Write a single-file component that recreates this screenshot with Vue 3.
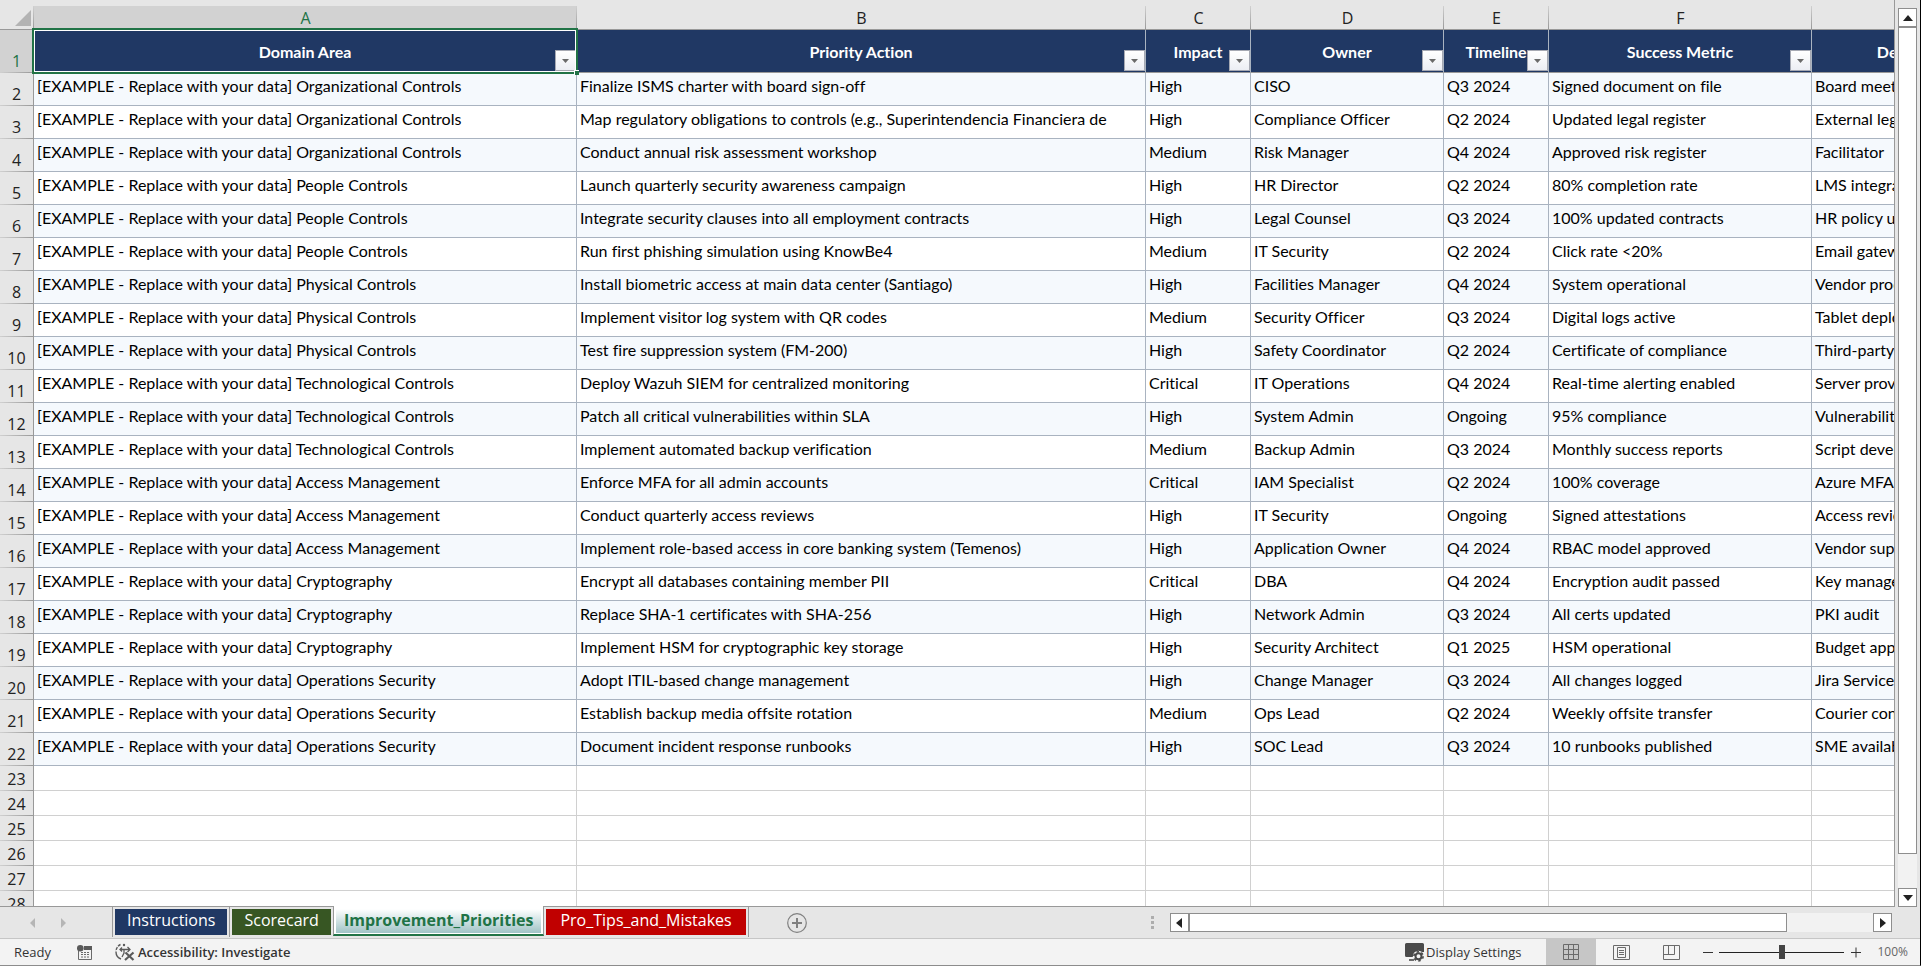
<template>
  <div class="workbook">
    <div class="workspace">
      <div class="sheet">
        <table class="grid">
          <colgroup>
            <col class="col-index" />
            <col v-for="col in columns" :key="col.letter" :class="'col-' + col.letter.toLowerCase()" />
          </colgroup>
          <thead>
            <tr class="letters">
              <th class="corner">
                <svg width="16" height="16" viewBox="0 0 16 16"><path d="M16 0V16H0Z" fill="#b3b3b3" /></svg>
              </th>
              <th
                v-for="col in columns"
                :key="col.letter"
                scope="col"
                class="letter"
                :class="{ selected: col.letter === 'A' }"
              >{{ col.letter }}</th>
            </tr>
          </thead>
          <tbody>
            <tr class="titles">
              <th scope="row" class="index selected">1</th>
              <th v-for="col in columns" :key="col.letter" class="title">
                {{ col.title }}
                <button type="button" class="filter" :aria-label="'Filter ' + col.title">
                  <svg width="7" height="4" viewBox="0 0 7 4"><path d="M0 0H7L3.5 4Z" fill="#6a6a6a" /></svg>
                </button>
                <span v-if="col.letter === 'A'" class="selection"></span>
              </th>
            </tr>
            <tr v-for="(row, i) in rows" :key="i" class="data" :class="{ banded: i % 2 === 0 }">
              <th scope="row" class="index">{{ i + 2 }}</th>
              <td>[EXAMPLE - Replace with your data] {{ row[0] }}</td>
              <td v-for="(cell, c) in row.slice(1)" :key="c">{{ cell }}</td>
            </tr>
            <tr v-for="n in 6" :key="'blank' + n" class="blank">
              <th scope="row" class="index">{{ n + 22 }}</th>
              <td v-for="col in columns" :key="col.letter"></td>
            </tr>
          </tbody>
        </table>
      </div>
      <div class="vscroll">
        <button type="button" class="scroll-btn" aria-label="Scroll up">
          <svg width="10" height="6" viewBox="0 0 10 6"><path d="M5 0L10 6H0Z" fill="#222" /></svg>
        </button>
        <div class="vtrack"><div class="vthumb"></div></div>
        <button type="button" class="scroll-btn" aria-label="Scroll down">
          <svg width="10" height="6" viewBox="0 0 10 6"><path d="M0 0H10L5 6Z" fill="#222" /></svg>
        </button>
      </div>
    </div>

    <div class="tabbar">
      <div class="tab-nav">
        <button type="button" aria-label="Previous sheet">
          <svg width="5" height="10" viewBox="0 0 5 10"><path d="M5 0V10L0 5Z" fill="#b5b5b5" /></svg>
        </button>
        <button type="button" aria-label="Next sheet">
          <svg width="5" height="10" viewBox="0 0 5 10"><path d="M0 0V10L5 5Z" fill="#b5b5b5" /></svg>
        </button>
      </div>
      <div class="tabs">
        <button
          v-for="tab in tabs"
          :key="tab.name"
          type="button"
          class="tab"
          :class="[tab.tone, { active: tab.name === activeTab }]"
          @click="activeTab = tab.name"
        ><span>{{ tab.name }}</span></button>
      </div>
      <button type="button" class="add-sheet" aria-label="New sheet">
        <svg width="20" height="20" viewBox="0 0 20 20" fill="none" stroke="#808080">
          <circle cx="10" cy="10" r="9.3" stroke-width="1.2" />
          <path d="M10 5V15M5 10H15" stroke-width="2" />
        </svg>
      </button>
      <div class="hscroll">
        <svg class="grip" width="3" height="13" viewBox="0 0 3 13" fill="#adadad">
          <path d="M0 0H3V3H0ZM0 5H3V8H0ZM0 10H3V13H0Z" />
        </svg>
        <button type="button" class="scroll-btn" aria-label="Scroll left">
          <svg width="6" height="10" viewBox="0 0 6 10"><path d="M6 0V10L0 5Z" fill="#222" /></svg>
        </button>
        <div class="htrack"><div class="hthumb"></div></div>
        <button type="button" class="scroll-btn" aria-label="Scroll right">
          <svg width="6" height="10" viewBox="0 0 6 10"><path d="M0 0V10L6 5Z" fill="#222" /></svg>
        </button>
      </div>
    </div>

    <div class="statusbar">
      <span class="ready">Ready</span>
      <button type="button" class="macro" aria-label="Record macro">
        <svg width="15" height="15" viewBox="0 0 15 15">
          <path d="M1.5 6V14.5H14.5V2" fill="none" stroke="#6a6a6a" />
          <path d="M7 1H15V5H7Z" fill="#5a5a5a" />
          <circle cx="3.3" cy="3.3" r="3.3" fill="#5a5a5a" />
          <path d="M4 7.5H6M7 7.5H9M10 7.5H12M4 9.5H6M7 9.5H9M10 9.5H12M4 12H6M7 12H9M10 12H12" stroke="#6a6a6a" />
        </svg>
      </button>
      <button type="button" class="accessibility">
        <svg width="20" height="18" viewBox="0 0 20 18" fill="none" stroke="#5a5a5a">
          <path d="M5.5 1.5A7.6 7.6 0 0 0 1 8.5" stroke-width="1.4" stroke-dasharray="3 1" />
          <path d="M1 9A7.6 7.6 0 0 0 6 16" stroke-width="1.4" />
          <circle cx="9" cy="2" r="1.2" fill="#5a5a5a" stroke="none" />
          <path d="M5 6.5H15M7 4.5L5 6.5L7 8.5M12.5 4L15 6.5L12.5 9M9 7V10L7 14" stroke-width="1.3" />
          <path d="M10.5 9.5L18.5 17M18.5 9.5L10 17" stroke-width="2.2" />
        </svg>
        Accessibility: Investigate
      </button>
      <div class="status-right">
        <button type="button" class="display">
          <svg width="19" height="19" viewBox="0 0 19 19">
            <path d="M1.5 0H17.5Q19 0 19 1.5V9H14L9 11V14H1.5Q0 14 0 12.5V1.5Q0 0 1.5 0Z" fill="#4a4a4a" />
            <path d="M4 17H9" stroke="#4a4a4a" stroke-width="1.6" />
            <circle cx="13.5" cy="13.3" r="5.6" fill="#f3f3f3" />
            <circle cx="13.5" cy="13.3" r="3" fill="none" stroke="#4a4a4a" stroke-width="2" />
            <circle cx="13.5" cy="13.3" r="4.6" fill="none" stroke="#4a4a4a" stroke-width="1.6" stroke-dasharray="2.4 2.4" />
          </svg>
          Display Settings
        </button>
        <button type="button" class="view on" aria-label="Normal view">
          <svg width="16" height="16" viewBox="0 0 16 16" fill="none" stroke="#6a6a6a">
            <path d="M.5 .5H15.5V15.5H.5ZM5.5 .5V15.5M10.5 .5V15.5M.5 5.5H15.5M.5 10.5H15.5" />
          </svg>
        </button>
        <button type="button" class="view" aria-label="Page layout view">
          <svg width="17" height="15" viewBox="0 0 17 15" fill="none" stroke="#6a6a6a">
            <path d="M.5 .5H16.5V14.5H.5ZM4.5 2.5H12.5V12.5H4.5ZM6 5.5H11M6 7.5H11M6 9.5H11" />
          </svg>
        </button>
        <button type="button" class="view" aria-label="Page break preview">
          <svg width="17" height="15" viewBox="0 0 17 15" fill="none" stroke="#6a6a6a">
            <path d="M.5 .5H16.5V14.5H.5ZM.5 9.5H11.5V.5M5.5 .5V9.5" />
          </svg>
        </button>
        <button type="button" class="zoom-btn" aria-label="Zoom out">
          <svg width="11" height="11" viewBox="0 0 11 11"><path d="M0 5.5H10" stroke="#333" /></svg>
        </button>
        <input v-model="zoom" class="zoom" type="range" min="0" max="200" aria-label="Zoom" />
        <button type="button" class="zoom-btn" aria-label="Zoom in">
          <svg width="11" height="11" viewBox="0 0 11 11"><path d="M0 5.5H10M5 .5V10.5" stroke="#333" /></svg>
        </button>
        <span class="percent">{{ zoom }}%</span>
      </div>
    </div>
  </div>
</template>

<script setup>
import { ref } from 'vue';

const activeTab = ref('Improvement_Priorities');
const zoom = ref(100);

const columns = [
  { letter: 'A', title: 'Domain Area' },
  { letter: 'B', title: 'Priority Action' },
  { letter: 'C', title: 'Impact' },
  { letter: 'D', title: 'Owner' },
  { letter: 'E', title: 'Timeline' },
  { letter: 'F', title: 'Success Metric' },
  { letter: 'G', title: 'Dependencies' },
];

const tabs = [
  { name: 'Instructions', tone: 'navy' },
  { name: 'Scorecard', tone: 'green' },
  { name: 'Improvement_Priorities', tone: 'teal' },
  { name: 'Pro_Tips_and_Mistakes', tone: 'red' },
];

const rows = [
  ['Organizational Controls', 'Finalize ISMS charter with board sign-off', 'High', 'CISO', 'Q3 2024', 'Signed document on file', 'Board meeting'],
  ['Organizational Controls', 'Map regulatory obligations to controls (e.g., Superintendencia Financiera de', 'High', 'Compliance Officer', 'Q2 2024', 'Updated legal register', 'External legal'],
  ['Organizational Controls', 'Conduct annual risk assessment workshop', 'Medium', 'Risk Manager', 'Q4 2024', 'Approved risk register', 'Facilitator'],
  ['People Controls', 'Launch quarterly security awareness campaign', 'High', 'HR Director', 'Q2 2024', '80% completion rate', 'LMS integration'],
  ['People Controls', 'Integrate security clauses into all employment contracts', 'High', 'Legal Counsel', 'Q3 2024', '100% updated contracts', 'HR policy update'],
  ['People Controls', 'Run first phishing simulation using KnowBe4', 'Medium', 'IT Security', 'Q2 2024', 'Click rate <20%', 'Email gateway'],
  ['Physical Controls', 'Install biometric access at main data center (Santiago)', 'High', 'Facilities Manager', 'Q4 2024', 'System operational', 'Vendor procurement'],
  ['Physical Controls', 'Implement visitor log system with QR codes', 'Medium', 'Security Officer', 'Q3 2024', 'Digital logs active', 'Tablet deployment'],
  ['Physical Controls', 'Test fire suppression system (FM-200)', 'High', 'Safety Coordinator', 'Q2 2024', 'Certificate of compliance', 'Third-party'],
  ['Technological Controls', 'Deploy Wazuh SIEM for centralized monitoring', 'Critical', 'IT Operations', 'Q4 2024', 'Real-time alerting enabled', 'Server provisioning'],
  ['Technological Controls', 'Patch all critical vulnerabilities within SLA', 'High', 'System Admin', 'Ongoing', '95% compliance', 'Vulnerability'],
  ['Technological Controls', 'Implement automated backup verification', 'Medium', 'Backup Admin', 'Q3 2024', 'Monthly success reports', 'Script development'],
  ['Access Management', 'Enforce MFA for all admin accounts', 'Critical', 'IAM Specialist', 'Q2 2024', '100% coverage', 'Azure MFA'],
  ['Access Management', 'Conduct quarterly access reviews', 'High', 'IT Security', 'Ongoing', 'Signed attestations', 'Access review'],
  ['Access Management', 'Implement role-based access in core banking system (Temenos)', 'High', 'Application Owner', 'Q4 2024', 'RBAC model approved', 'Vendor support'],
  ['Cryptography', 'Encrypt all databases containing member PII', 'Critical', 'DBA', 'Q4 2024', 'Encryption audit passed', 'Key management'],
  ['Cryptography', 'Replace SHA-1 certificates with SHA-256', 'High', 'Network Admin', 'Q3 2024', 'All certs updated', 'PKI audit'],
  ['Cryptography', 'Implement HSM for cryptographic key storage', 'High', 'Security Architect', 'Q1 2025', 'HSM operational', 'Budget approval'],
  ['Operations Security', 'Adopt ITIL-based change management', 'High', 'Change Manager', 'Q3 2024', 'All changes logged', 'Jira Service'],
  ['Operations Security', 'Establish backup media offsite rotation', 'Medium', 'Ops Lead', 'Q2 2024', 'Weekly offsite transfer', 'Courier contract'],
  ['Operations Security', 'Document incident response runbooks', 'High', 'SOC Lead', 'Q3 2024', '10 runbooks published', 'SME availability'],
];
</script>

<style>
body {
  margin: 0;
  overflow: hidden;
}
</style>

<style scoped>
.workbook {
  display: flex;
  flex-direction: column;
  height: 100vh;
  box-sizing: border-box;
  border-right: 1px solid #000;
  border-bottom: 1px solid #8c8c8c;
  background: #e6e6e6;
  font-family: "Open Sans", "Noto Sans", sans-serif;
}

button {
  display: flex;
  align-items: center;
  justify-content: center;
  padding: 0;
  border: none;
  background: none;
  font: inherit;
  color: inherit;
}

svg {
  display: block;
  flex: none;
}

.workspace {
  flex: 1;
  min-height: 0;
  display: flex;
}

/* grid */
.sheet {
  flex: 1;
  min-width: 0;
  overflow: hidden;
  padding-top: 6px;
  border-right: 1px solid #999;
  border-bottom: 1px solid #999;
}

.grid {
  width: 2044px;
  table-layout: fixed;
  border-collapse: separate;
  border-spacing: 0;
  background: #fff;
  font-variant-ligatures: none;
}

.col-index { width: 34px; }
.col-a { width: 543px; }
.col-b { width: 569px; }
.col-c { width: 105px; }
.col-d { width: 193px; }
.col-e { width: 105px; }
.col-f { width: 263px; }
.col-g { width: 232px; }

.grid th,
.grid td {
  box-sizing: border-box;
  padding: 0;
  white-space: nowrap;
}

.letters th {
  height: 24px;
  border-bottom: 1px solid #999;
  background: linear-gradient(#d0d0d0, #999) right / 1px 100% no-repeat #e6e6e6;
  font-size: 16px;
  line-height: 22px;
  font-weight: 400;
  color: #222;
}

.letters .selected {
  background-color: #d2d2d2;
  color: #217346;
}

.corner svg {
  margin: 0 3px 0 auto;
}

.grid .index {
  padding-bottom: 2px;
  vertical-align: bottom;
  border-right: 1px solid #999;
  background: linear-gradient(90deg, #d0d0d0, #999) bottom / 100% 1px no-repeat #e6e6e6;
  font-size: 16px;
  line-height: 20px;
  font-weight: 400;
  color: #222;
}

.grid .index.selected {
  background-color: #d2d2d2;
  color: #217346;
}

.titles th {
  height: 43px;
}

.grid .title {
  position: relative;
  padding-top: 2px;
  border-right: 1px solid #a9b3c0;
  border-bottom: 1px solid #999;
  background: #203864;
  font-family: Lato, sans-serif;
  font-size: 16px;
  line-height: 20px;
  font-weight: 700;
  color: #fff;
}

.filter {
  position: absolute;
  right: 0;
  bottom: 1px;
  width: 21px;
  height: 21px;
  border: 1px solid #a6a9b3;
  background: linear-gradient(#fff, #eceef4);
}

.selection {
  position: absolute;
  inset: -2px;
  z-index: 2;
  border: 2px solid #217346;
  box-shadow: inset 0 0 0 1px #fff;
  pointer-events: none;
}

.selection::after {
  content: "";
  position: absolute;
  right: -3px;
  bottom: -3px;
  width: 4px;
  height: 4px;
  border-top: 1px solid #fff;
  border-left: 1px solid #fff;
  background: #217346;
}

.grid .data td {
  height: 33px;
  padding: 0 3px 6px;
  overflow: hidden;
  border-right: 1px solid #a9b3c0;
  border-bottom: 1px solid #a9b3c0;
  font-family: Lato, sans-serif;
  font-size: 16px;
  line-height: 20px;
  color: #000;
}

.banded td {
  background: #f5f9fd;
}

.blank td {
  height: 25px;
  border-right: 1px solid #d0d0d0;
  border-bottom: 1px solid #d0d0d0;
}

/* scrollbars */
.scroll-btn {
  flex: none;
  box-sizing: border-box;
  width: 19px;
  height: 19px;
  border: 1px solid #8e8e8e;
  background: #fff;
}

.vscroll {
  flex: none;
  display: flex;
  flex-direction: column;
  width: 19px;
  padding: 8px 3px 0;
}

.vtrack {
  flex: 1;
  background: #f2f2f2;
}

.vthumb {
  box-sizing: border-box;
  height: 96%;
  border: 1px solid #8e8e8e;
  background: #fff;
}

.hscroll {
  flex: none;
  display: flex;
  align-items: center;
  width: 38.6%;
  margin-left: auto;
  margin-right: 28px;
}

.grip {
  margin-right: 16px;
}

.htrack {
  flex: 1;
  height: 19px;
  background: #f2f2f2;
}

.hthumb {
  box-sizing: border-box;
  width: 87.5%;
  height: 19px;
  border: 1px solid #8e8e8e;
  background: #fff;
}

/* sheet tabs */
.tabbar {
  flex: none;
  display: flex;
  height: 31px;
  border-bottom: 1px solid #c6c6c6;
}

.tab-nav {
  display: flex;
  gap: 26px;
  width: 82px;
  padding-left: 30px;
}

.tabs {
  display: flex;
  align-items: flex-start;
}

.tab {
  height: 30px;
  padding: 2px 2px 0;
  border-left: 1px solid #999;
  align-items: flex-start;
  font-size: 16px;
  line-height: 22px;
  color: #fff;
}

.tab:last-child {
  border-right: 1px solid #999;
}

.tab span {
  height: 26px;
  padding: 0 12px;
}

.navy span { background: #203864; }
.green span { background: #375623; }
.red span { padding: 0 14px; background: #c00000; }

.tab.active {
  height: 30px;
  margin-top: -1px;
  padding-top: 3px;
  border-right: 1px solid #999;
  border-bottom: 2px solid #217346;
  background: #fff;
  font-weight: 700;
  color: #217346;
}

.active span {
  height: 24px;
  padding: 0 8px;
  background: linear-gradient(#fff, #a0c3c6);
}

.tab.active + .tab {
  border-left: none;
}

.add-sheet {
  margin-left: 38px;
}

/* status bar */
.statusbar {
  flex: none;
  display: flex;
  align-items: center;
  height: 26px;
  background: #f3f3f3;
  font-size: 13px;
  line-height: 18px;
  color: #333;
}

.ready {
  padding-left: 14px;
}

.macro {
  margin-left: 26px;
}

.accessibility {
  gap: 3px;
  margin-left: 23px;
  font-weight: 600;
}

.status-right {
  display: flex;
  align-items: center;
  height: 100%;
  margin-left: auto;
  padding-right: 12px;
}

.display {
  gap: 2px;
  margin-right: 25px;
}

.view {
  width: 50px;
  height: 100%;
}

.view.on {
  background: #c6c6c6;
}

.zoom-btn {
  margin-left: 7px;
}

.zoom {
  appearance: none;
  width: 125px;
  height: 14px;
  margin: 0 0 0 5px;
  background: linear-gradient(#222, #222) center / 100% 1px no-repeat;
}

.zoom::-webkit-slider-thumb {
  appearance: none;
  width: 6px;
  height: 14px;
  border-radius: 0;
  background: #444;
}

.percent {
  margin-left: 15px;
  font-size: 12px;
  color: #666;
}
</style>
